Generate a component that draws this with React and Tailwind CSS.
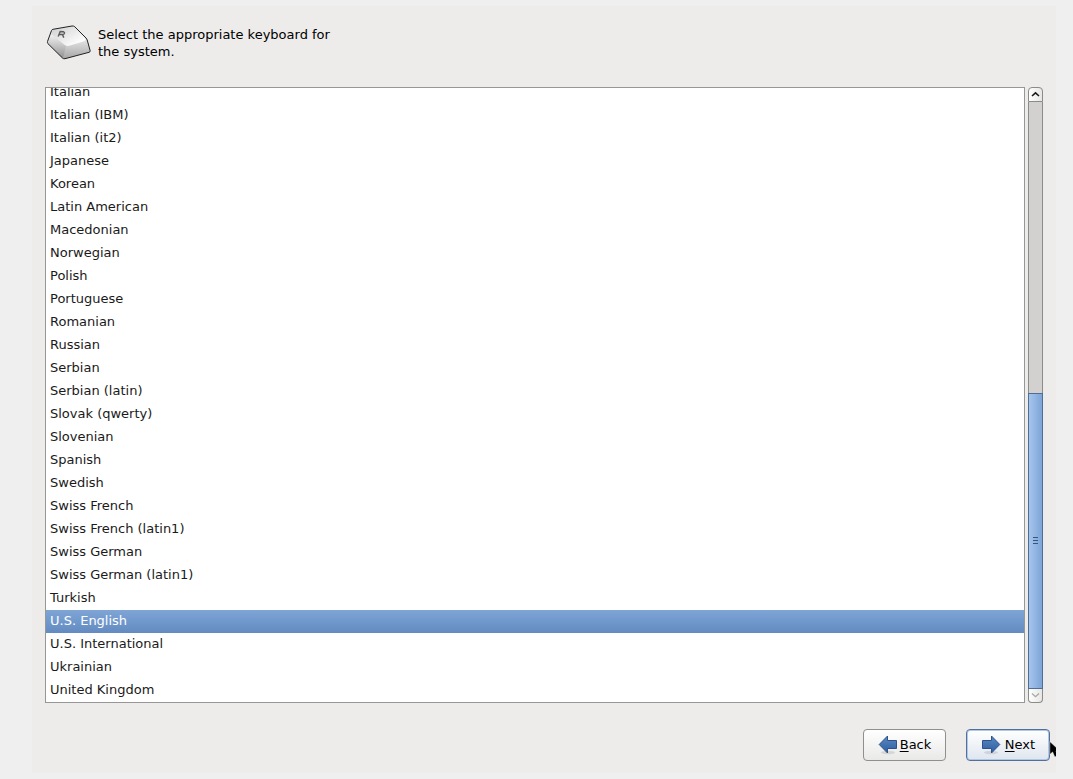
import { useState } from "react";

const keyboards = [
  "Italian",
  "Italian (IBM)",
  "Italian (it2)",
  "Japanese",
  "Korean",
  "Latin American",
  "Macedonian",
  "Norwegian",
  "Polish",
  "Portuguese",
  "Romanian",
  "Russian",
  "Serbian",
  "Serbian (latin)",
  "Slovak (qwerty)",
  "Slovenian",
  "Spanish",
  "Swedish",
  "Swiss French",
  "Swiss French (latin1)",
  "Swiss German",
  "Swiss German (latin1)",
  "Turkish",
  "U.S. English",
  "U.S. International",
  "Ukrainian",
  "United Kingdom",
];

function KeyIcon() {
  return (
    <svg className="w-12 h-10 shrink-0" viewBox="0 0 48 40" aria-hidden="true">
      <defs>
        <linearGradient id="keyTop" x1="0" y1="0" x2="1" y2="1">
          <stop offset="0" stopColor="#cfcfcf" />
          <stop offset="0.8" stopColor="#fcfcfc" />
        </linearGradient>
        <linearGradient id="keyFront" x1="0" y1="0" x2="0" y2="1">
          <stop offset="0.4" stopColor="#e6e6e6" />
          <stop offset="1" stopColor="#a6a6a6" />
        </linearGradient>
        <linearGradient id="keySide" x1="0" y1="0" x2="0" y2="1">
          <stop offset="0.2" stopColor="#ececec" />
          <stop offset="1" stopColor="#909090" />
        </linearGradient>
      </defs>
      <path d="M5.5 8.5 Q6 7.5 7 7.3 L26 4 Q27.8 3.8 28.8 4.8 L40 16 Q40.8 17 41.2 18 L44.2 28.8 Q44.3 30 43 30.3 L19 36.7 Q17.5 37 16.5 36 L1.8 21.5 Q1.2 20.5 1.5 19.5 Z" fill="url(#keyFront)" />
      <path d="M5.5 8.5 L1.5 19.5 Q1.2 20.5 1.8 21.5 L17 36.5 L20 24 L5 12 Z" fill="url(#keySide)" />
      <path d="M6 8.6 Q6.5 7.8 7.5 7.6 L27 4.4 L40 17 Q39.6 18.6 38 19.2 L24 23.6 Q20.5 24.6 18.5 22.8 L6 12.6 Q4.4 11 6 8.6 Z" fill="url(#keyTop)" />
      <path d="M5.5 8.5 Q6 7.5 7 7.3 L26 4 Q27.8 3.8 28.8 4.8 L40 16 Q40.8 17 41.2 18 L44.2 28.8 Q44.3 30 43 30.3 L19 36.7 Q17.5 37 16.5 36 L1.8 21.5 Q1.2 20.5 1.5 19.5 Z" fill="none" stroke="#222" />
      {/* engraved marking on the cap */}
      <path d="M12.2 14.6 L14.2 9.6 L17.6 9.8 Q19.2 10.6 18 12 Q16.5 13 13.4 12.2 M16.4 12.4 L17.8 15.6" fill="none" stroke="#5c5c5c" strokeWidth="1.4" />
    </svg>
  );
}

function Arrow({ id, className }) {
  return (
    <svg className={className} viewBox="0 0 20 20" aria-hidden="true">
      <defs>
        <linearGradient id={id} x1="0" y1="0" x2="0" y2="1">
          <stop offset="0" stopColor="#5a88c0" />
          <stop offset="1" stopColor="#2f5fa3" />
        </linearGradient>
      </defs>
      <ellipse cx="10" cy="17.5" rx="7" ry="1.8" fill="#000" opacity="0.1" />
      <path d="M1.5 5.5 H10.5 V1 L18.8 9.5 L10.5 18 V13.5 H1.5 Z" fill={`url(#${id})`} stroke="#2b528a" />
    </svg>
  );
}

function Scrollbar() {
  return (
    <div className="w-[15px] flex flex-col">
      <button type="button" aria-label="Scroll up" className="h-[15px] shrink-0 flex items-center justify-center border border-[#8b8b88] rounded-t bg-linear-to-r from-white to-[#e6e6e4]">
        <svg className="w-[9px] h-[9px]" viewBox="0 0 9 9">
          <path d="M1 6 L4.5 2.8 L8 6" fill="none" stroke="#1a1a1a" strokeWidth="1.6" />
        </svg>
      </button>
      <div className="flex-1 min-h-0 flex flex-col">
        <div className="flex-1 border-x border-[#8b8b88] bg-[#d2d1cf]" />
        <div className="h-[50.5%] shrink-0 flex flex-col items-center justify-center gap-0.5 border border-[#4f6e96] bg-linear-to-r from-[#a7c5ec] to-[#7da5d8]">
          <span className="w-[5px] h-px bg-[#35557f]" />
          <span className="w-[5px] h-px bg-[#35557f]" />
          <span className="w-[5px] h-px bg-[#35557f]" />
        </div>
      </div>
      <button type="button" disabled aria-label="Scroll down" className="h-3.5 shrink-0 flex items-center justify-center border border-t-0 border-[#8b8b88] rounded-b bg-linear-to-r from-white to-[#e6e6e4]">
        <svg className="w-[9px] h-[9px]" viewBox="0 0 9 9">
          <path d="M1 2.5 L4.5 5.7 L8 2.5" fill="none" stroke="#a8a8a8" strokeWidth="1.3" />
        </svg>
      </button>
    </div>
  );
}

export default function App() {
  const [selected, setSelected] = useState("U.S. English");

  return (
    <div className="h-screen bg-[#efefef] py-1.5 pl-8 pr-[17px] text-[13px] leading-[17px] text-black [font-family:'DejaVu_Sans',sans-serif]">
      <main className="relative h-full flex flex-col overflow-hidden bg-[#edeceb]">
        <header className="flex items-start pt-4 pl-3.5 pb-[25px]">
          <KeyIcon />
          <h1 id="title" className="w-60 pt-1 pl-1">Select the appropriate keyboard for the system.</h1>
        </header>

        <div className="flex-1 min-h-0 flex gap-[3px] px-[13px]">
          <ul role="listbox" aria-labelledby="title" className="flex-1 min-h-0 flex flex-col justify-end overflow-hidden border border-[#979795] bg-white text-[#1a1a1a]">
            {keyboards.map((name) => (
              <li
                key={name}
                role="option"
                aria-selected={name === selected}
                onClick={() => setSelected(name)}
                className="h-[23px] shrink-0 px-1 leading-[22px] aria-selected:bg-linear-to-b aria-selected:from-[#7fa5d6] aria-selected:to-[#638bc1] aria-selected:text-white"
              >
                {name}
              </li>
            ))}
          </ul>
          <Scrollbar />
        </div>

        <footer className="flex justify-end gap-5 pt-[26px] pb-3 pr-1.5">
          <button type="button" className="w-[83px] h-8 flex items-center justify-center gap-0.5 rounded border border-[#8f8f8c] bg-linear-to-b from-white to-[#e9e9e8]">
            <Arrow id="arrowBack" className="w-5 h-5 -scale-x-100" />
            <span className="pb-0.5"><u className="underline-offset-2">B</u>ack</span>
          </button>
          <button type="button" className="w-[84px] h-8 flex items-center justify-center gap-1 rounded border border-[#4f719f] bg-linear-to-b from-white to-[#dfe6ef] shadow-[inset_0_0_0_1px_#b3c7e2]">
            <Arrow id="arrowNext" className="w-5 h-5" />
            <span className="pb-0.5"><u className="underline-offset-2">N</u>ext</span>
          </button>
        </footer>

        {/* mouse pointer, cut off by the panel edge */}
        <svg className="absolute right-0 bottom-4 w-[7px] h-4" viewBox="0 0 7 16" aria-hidden="true">
          <path d="M0.8 0.5 V13.5 L3.6 11 L5.8 16 L9 14.5 L7 10 H11 Z" fill="#000" stroke="#fff" strokeWidth="0.5" />
        </svg>
      </main>
    </div>
  );
}
